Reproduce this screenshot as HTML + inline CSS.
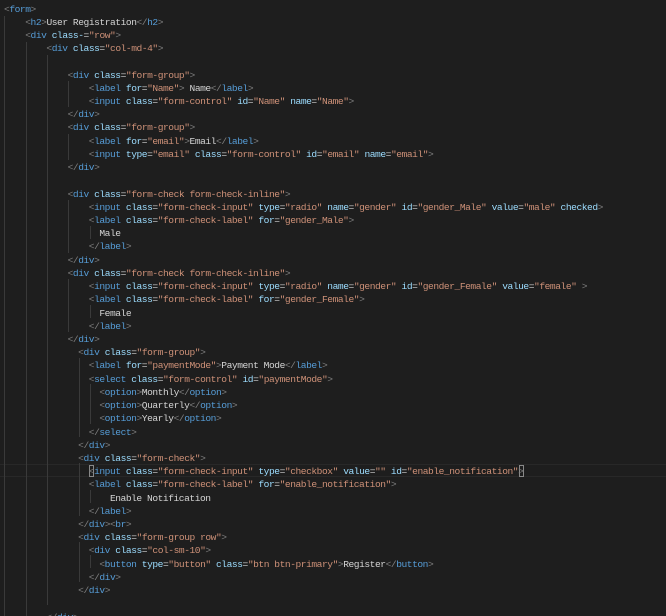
<!DOCTYPE html>
<html><head><meta charset="utf-8"><style>
html,body{margin:0;padding:0;background:#1e1e1e;width:666px;height:616px;overflow:hidden;position:relative}
pre{margin:0;position:absolute;left:4px;top:2.5px;font-family:"Liberation Mono",monospace;font-size:9.6px;letter-spacing:-0.46px;line-height:13.22px;color:#d4d4d4;white-space:pre}
.p{color:#808080}.t{color:#569cd6}.a{color:#9cdcfe}.s{color:#ce9178}
.g{position:absolute;width:1px;background:#3a3a3a}
.hl{position:absolute;left:0;right:0;height:13px;border-top:1px solid #282828;border-bottom:1px solid #282828;box-sizing:border-box}
.bm{position:absolute;width:5px;height:12px;border:1px solid #888;box-sizing:border-box}
</style></head><body>
<div class="hl" style="top:464px"></div>
<div class="bm" style="left:89px;top:464.5px"></div>
<div class="bm" style="left:519px;top:464.5px"></div>
<div class="g" style="left:4px;top:16px;height:600px"></div>
<div class="g" style="left:26px;top:42px;height:574px"></div>
<div class="g" style="left:47px;top:55px;height:550px"></div>
<div class="g" style="left:68px;top:81px;height:26px"></div>
<div class="g" style="left:68px;top:134px;height:26px"></div>
<div class="g" style="left:68px;top:200px;height:53px"></div>
<div class="g" style="left:68px;top:279px;height:53px"></div>
<div class="g" style="left:79px;top:358px;height:79px"></div>
<div class="g" style="left:79px;top:463px;height:53px"></div>
<div class="g" style="left:79px;top:542px;height:40px"></div>
<div class="g" style="left:90px;top:226px;height:13px"></div>
<div class="g" style="left:90px;top:305px;height:13px"></div>
<div class="g" style="left:90px;top:384px;height:40px"></div>
<div class="g" style="left:90px;top:490px;height:13px"></div>
<div class="g" style="left:90px;top:555px;height:13px"></div>
<pre><span class="p">&lt;</span><span class="t">form</span><span class="p">&gt;</span>
    <span class="p">&lt;</span><span class="t">h2</span><span class="p">&gt;</span>User Registration<span class="p">&lt;/</span><span class="t">h2</span><span class="p">&gt;</span>
    <span class="p">&lt;</span><span class="t">div</span> <span class="a">class-</span>=<span class="s">"row"</span><span class="p">&gt;</span>
        <span class="p">&lt;</span><span class="t">div</span> <span class="a">class</span>=<span class="s">"col-md-4"</span><span class="p">&gt;</span>

            <span class="p">&lt;</span><span class="t">div</span> <span class="a">class</span>=<span class="s">"form-group"</span><span class="p">&gt;</span>
                <span class="p">&lt;</span><span class="t">label</span> <span class="a">for</span>=<span class="s">"Name"</span><span class="p">&gt;</span> Name<span class="p">&lt;/</span><span class="t">label</span><span class="p">&gt;</span>
                <span class="p">&lt;</span><span class="t">input</span> <span class="a">class</span>=<span class="s">"form-control"</span> <span class="a">id</span>=<span class="s">"Name"</span> <span class="a">name</span>=<span class="s">"Name"</span><span class="p">&gt;</span>
            <span class="p">&lt;/</span><span class="t">div</span><span class="p">&gt;</span>
            <span class="p">&lt;</span><span class="t">div</span> <span class="a">class</span>=<span class="s">"form-group"</span><span class="p">&gt;</span>
                <span class="p">&lt;</span><span class="t">label</span> <span class="a">for</span>=<span class="s">"email"</span><span class="p">&gt;</span>Email<span class="p">&lt;/</span><span class="t">label</span><span class="p">&gt;</span>
                <span class="p">&lt;</span><span class="t">input</span> <span class="a">type</span>=<span class="s">"email"</span> <span class="a">class</span>=<span class="s">"form-control"</span> <span class="a">id</span>=<span class="s">"email"</span> <span class="a">name</span>=<span class="s">"email"</span><span class="p">&gt;</span>
            <span class="p">&lt;/</span><span class="t">div</span><span class="p">&gt;</span>

            <span class="p">&lt;</span><span class="t">div</span> <span class="a">class</span>=<span class="s">"form-check form-check-inline"</span><span class="p">&gt;</span>
                <span class="p">&lt;</span><span class="t">input</span> <span class="a">class</span>=<span class="s">"form-check-input"</span> <span class="a">type</span>=<span class="s">"radio"</span> <span class="a">name</span>=<span class="s">"gender"</span> <span class="a">id</span>=<span class="s">"gender_Male"</span> <span class="a">value</span>=<span class="s">"male"</span> <span class="a">checked</span><span class="p">&gt;</span>
                <span class="p">&lt;</span><span class="t">label</span> <span class="a">class</span>=<span class="s">"form-check-label"</span> <span class="a">for</span>=<span class="s">"gender_Male"</span><span class="p">&gt;</span>
                  Male
                <span class="p">&lt;/</span><span class="t">label</span><span class="p">&gt;</span>
            <span class="p">&lt;/</span><span class="t">div</span><span class="p">&gt;</span>
            <span class="p">&lt;</span><span class="t">div</span> <span class="a">class</span>=<span class="s">"form-check form-check-inline"</span><span class="p">&gt;</span>
                <span class="p">&lt;</span><span class="t">input</span> <span class="a">class</span>=<span class="s">"form-check-input"</span> <span class="a">type</span>=<span class="s">"radio"</span> <span class="a">name</span>=<span class="s">"gender"</span> <span class="a">id</span>=<span class="s">"gender_Female"</span> <span class="a">value</span>=<span class="s">"female"</span> <span class="p">&gt;</span>
                <span class="p">&lt;</span><span class="t">label</span> <span class="a">class</span>=<span class="s">"form-check-label"</span> <span class="a">for</span>=<span class="s">"gender_Female"</span><span class="p">&gt;</span>
                  Female
                <span class="p">&lt;/</span><span class="t">label</span><span class="p">&gt;</span>
            <span class="p">&lt;/</span><span class="t">div</span><span class="p">&gt;</span>
              <span class="p">&lt;</span><span class="t">div</span> <span class="a">class</span>=<span class="s">"form-group"</span><span class="p">&gt;</span>
                <span class="p">&lt;</span><span class="t">label</span> <span class="a">for</span>=<span class="s">"paymentMode"</span><span class="p">&gt;</span>Payment Mode<span class="p">&lt;/</span><span class="t">label</span><span class="p">&gt;</span>
                <span class="p">&lt;</span><span class="t">select</span> <span class="a">class</span>=<span class="s">"form-control"</span> <span class="a">id</span>=<span class="s">"paymentMode"</span><span class="p">&gt;</span>
                  <span class="p">&lt;</span><span class="t">option</span><span class="p">&gt;</span>Monthly<span class="p">&lt;/</span><span class="t">option</span><span class="p">&gt;</span>
                  <span class="p">&lt;</span><span class="t">option</span><span class="p">&gt;</span>Quarterly<span class="p">&lt;/</span><span class="t">option</span><span class="p">&gt;</span>
                  <span class="p">&lt;</span><span class="t">option</span><span class="p">&gt;</span>Yearly<span class="p">&lt;/</span><span class="t">option</span><span class="p">&gt;</span>
                <span class="p">&lt;/</span><span class="t">select</span><span class="p">&gt;</span>
              <span class="p">&lt;/</span><span class="t">div</span><span class="p">&gt;</span>
              <span class="p">&lt;</span><span class="t">div</span> <span class="a">class</span>=<span class="s">"form-check"</span><span class="p">&gt;</span>
                <span class="p">&lt;</span><span class="t">input</span> <span class="a">class</span>=<span class="s">"form-check-input"</span> <span class="a">type</span>=<span class="s">"checkbox"</span> <span class="a">value</span>=<span class="s">""</span> <span class="a">id</span>=<span class="s">"enable_notification"</span><span class="p">&gt;</span>
                <span class="p">&lt;</span><span class="t">label</span> <span class="a">class</span>=<span class="s">"form-check-label"</span> <span class="a">for</span>=<span class="s">"enable_notification"</span><span class="p">&gt;</span>
                    Enable Notification
                <span class="p">&lt;/</span><span class="t">label</span><span class="p">&gt;</span>
              <span class="p">&lt;/</span><span class="t">div</span><span class="p">&gt;&lt;</span><span class="t">br</span><span class="p">&gt;</span>
              <span class="p">&lt;</span><span class="t">div</span> <span class="a">class</span>=<span class="s">"form-group row"</span><span class="p">&gt;</span>
                <span class="p">&lt;</span><span class="t">div</span> <span class="a">class</span>=<span class="s">"col-sm-10"</span><span class="p">&gt;</span>
                  <span class="p">&lt;</span><span class="t">button</span> <span class="a">type</span>=<span class="s">"button"</span> <span class="a">class</span>=<span class="s">"btn btn-primary"</span><span class="p">&gt;</span>Register<span class="p">&lt;/</span><span class="t">button</span><span class="p">&gt;</span>
                <span class="p">&lt;/</span><span class="t">div</span><span class="p">&gt;</span>
              <span class="p">&lt;/</span><span class="t">div</span><span class="p">&gt;</span>

        <span class="p">&lt;/</span><span class="t">div</span><span class="p">&gt;</span>
</pre>
</body></html>
